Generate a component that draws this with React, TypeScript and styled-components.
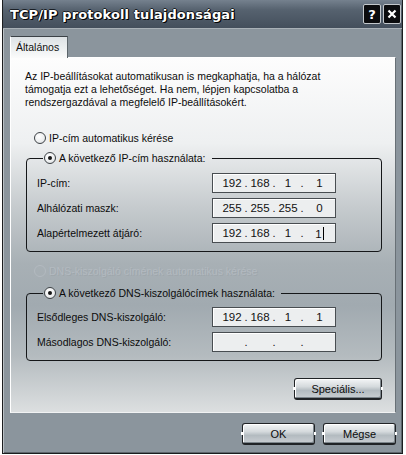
import { Fragment } from 'react';
import styled, { createGlobalStyle } from 'styled-components';

const GlobalStyle = createGlobalStyle`
  body {
    margin: 0;
    background: #ffffff;
    font-family: "Liberation Sans", Arial, sans-serif;
  }
`;

const Window = styled.div`
  width: 401px;
  height: 454px;
  margin-left: 2px;
  box-sizing: border-box;
  background: #8b959d;
  border: 1px solid #1b1d1f;
  border-top: none;
  box-shadow: inset 1px 0 0 #b9c0c5, inset -1px -1px 0 #5d656b;
  display: flex;
  flex-direction: column;
`;

const TitleBar = styled.div`
  height: 28px;
  display: flex;
  align-items: center;
  justify-content: space-between;
  padding: 0 1px 0 7px;
  background: linear-gradient(180deg, #75818e 0%, #56626f 35%, #444f5c 100%);
  border-bottom: 1px solid #a9b1b7;
`;

const Title = styled.span`
  color: #ffffff;
  font-family: "DejaVu Sans", sans-serif;
  font-weight: bold;
  font-size: 13px;
  letter-spacing: 0.1px;
  text-shadow: 1px 1px 0 #000, -1px 0 0 #1a1f25, 0 -1px 0 #1a1f25, 1px 0 0 #000;
`;

const CaptionButtons = styled.div`
  display: flex;
  gap: 2px;
`;

const CaptionButton = styled.div`
  width: 18px;
  height: 20px;
  box-sizing: border-box;
  background: #0b0c0e;
  border: 1px solid #c3c8cc;
  border-radius: 2px;
  display: flex;
  align-items: center;
  justify-content: center;
  color: #fff;
  font-family: "DejaVu Sans", sans-serif;
  font-weight: bold;
  font-size: 13px;
`;

const Body = styled.div`
  flex: 1;
  display: flex;
  flex-direction: column;
  padding: 7px 6px 0 7px;
`;

const TabStrip = styled.div`
  display: flex;
  height: 21px;
`;

const Tab = styled.div`
  position: relative;
  z-index: 1;
  width: 58px;
  height: 22px;
  box-sizing: border-box;
  padding-left: 5px;
  background: linear-gradient(180deg, #dde2e5 0%, #eef1f2 60%, #fbfbfb 100%);
  border-top: 1px solid #3b4146;
  border-left: 1px solid #ffffff;
  border-right: 1px solid #5c656b;
  font-size: 10.5px;
  line-height: 20px;
  color: #111;
`;

const Panel = styled.div`
  height: 356px;
  box-sizing: border-box;
  display: flex;
  flex-direction: column;
  padding: 12px 13px 0 14px;
  background: linear-gradient(
    180deg,
    #fdfdfd 0%,
    #eef0f1 24%,
    #c6cbce 42%,
    #a8b0b5 58%,
    #a1aab0 70%,
    #b4bbbf 84%,
    #dcdfe0 100%
  );
  border-top: 1px solid #ffffff;
  border-left: 1px solid #ffffff;
  border-right: 1px solid #687076;
  border-bottom: 1px solid #f1f2f3;
  color: #0c0c0c;
  font-size: 10.5px;
`;

const Intro = styled.p`
  margin: 0;
  line-height: 13px;
`;

const RadioRow = styled.div<{ $top: number; $disabled?: boolean }>`
  display: flex;
  align-items: center;
  gap: 3px;
  height: 16px;
  margin-top: ${(p) => p.$top}px;
  padding-left: 9px;
  color: ${(p) => (p.$disabled ? '#b3bac0' : '#0c0c0c')};
  text-shadow: ${(p) => (p.$disabled ? '1px 1px 0 rgba(150,158,164,0.5)' : 'none')};
`;

const RadioDot = styled.span<{ $checked?: boolean; $disabled?: boolean }>`
  width: 12px;
  height: 12px;
  box-sizing: border-box;
  border-radius: 50%;
  border: 1px solid ${(p) => (p.$disabled ? '#b3bac0' : '#3d4246')};
  background: ${(p) =>
    p.$disabled ? 'transparent' : 'radial-gradient(circle at 40% 35%, #ffffff 0%, #eceeef 60%, #c9cdd0 100%)'};
  display: flex;
  align-items: center;
  justify-content: center;
  &::after {
    content: '';
    width: 4px;
    height: 4px;
    border-radius: 50%;
    background: ${(p) => (p.$checked ? '#151515' : 'transparent')};
  }
`;

const Group = styled.fieldset<{ $top: number; $padTop: number }>`
  margin: ${(p) => p.$top}px 0 0 1px;
  padding: ${(p) => p.$padTop}px 0 8px 10px;
  border: 1px solid #151719;
  border-radius: 4px;
  min-inline-size: 0;
`;

const Legend = styled.legend`
  display: flex;
  align-items: center;
  gap: 3px;
  height: 16px;
  margin-left: 6px;
  padding: 0 6px 0 1px;
`;

const Fields = styled.div`
  display: grid;
  grid-template-columns: 175px 124px;
  grid-auto-rows: 20px;
  row-gap: 5px;
  align-items: center;
`;

const Label = styled.span`
  white-space: nowrap;
`;

const IpBox = styled.div`
  height: 20px;
  box-sizing: border-box;
  display: grid;
  grid-template-columns: 24px 4px 24px 4px 24px 4px 1fr;
  align-items: center;
  padding: 0 0 0 7px;
  background: #eceeef;
  border: 1px solid #484d51;
  box-shadow: inset 1px 1px 0 #ffffff;
  font-size: 11.5px;
  color: #111;
`;

const Octet = styled.span`
  text-align: center;
`;

const Dot = styled.span`
  text-align: center;
  font-size: 11px;
`;

const Caret = styled.span`
  display: inline-block;
  width: 1px;
  height: 13px;
  margin-left: 1px;
  background: #000;
  vertical-align: -2px;
`;

const Button = styled.button<{ $w: number }>`
  position: relative;
  width: ${(p) => p.$w}px;
  height: 22px;
  box-sizing: border-box;
  padding: 0;
  border: 1px solid #202326;
  border-bottom-width: 2px;
  border-radius: 3px;
  background: linear-gradient(180deg, #f3f5f6 0%, #d5dadd 40%, #b3bbc0 60%, #c9ced2 100%);
  box-shadow: inset 1px 1px 0 #ffffff, inset -1px -1px 0 #7d868c;
  font-family: "Liberation Sans", Arial, sans-serif;
  font-size: 11px;
  color: #0c0c0c;
  &::before,
  &::after {
    content: '';
    position: absolute;
    top: 8px;
    width: 2px;
    height: 3px;
    background: #ffffff;
  }
  &::before {
    left: -2px;
  }
  &::after {
    right: -2px;
  }
`;

const PanelActions = styled.div`
  display: flex;
  justify-content: flex-end;
  margin-top: 17px;
`;

const Footer = styled.div`
  display: flex;
  justify-content: flex-end;
  gap: 8px;
  margin-top: 10px;
`;

type Octets = [string, string, string, string];

const IpField = ({ octets, caret }: { octets: Octets; caret?: boolean }) => (
  <IpBox>
    <Octet>{octets[0]}</Octet>
    <Dot>.</Dot>
    <Octet>{octets[1]}</Octet>
    <Dot>.</Dot>
    <Octet>{octets[2]}</Octet>
    <Dot>.</Dot>
    <Octet>
      {octets[3]}
      {caret && <Caret />}
    </Octet>
  </IpBox>
);

const ipRows: { label: string; octets: Octets; caret?: boolean }[] = [
  { label: 'IP-cím:', octets: ['192', '168', '1', '1'] },
  { label: 'Alhálózati maszk:', octets: ['255', '255', '255', '0'] },
  { label: 'Alapértelmezett átjáró:', octets: ['192', '168', '1', '1'], caret: true },
];

const dnsRows: { label: string; octets: Octets }[] = [
  { label: 'Elsődleges DNS-kiszolgáló:', octets: ['192', '168', '1', '1'] },
  { label: 'Másodlagos DNS-kiszolgáló:', octets: ['', '', '', ''] },
];

export default function App() {
  return (
    <>
      <GlobalStyle />
      <Window>
        <TitleBar>
          <Title>TCP/IP protokoll tulajdonságai</Title>
          <CaptionButtons>
            <CaptionButton>?</CaptionButton>
            <CaptionButton>
              <svg width="10" height="10" viewBox="0 0 10 10">
                <path d="M1.5 1.5 L8.5 8.5 M8.5 1.5 L1.5 8.5" stroke="#fff" strokeWidth="2.2" />
              </svg>
            </CaptionButton>
          </CaptionButtons>
        </TitleBar>

        <Body>
          <TabStrip>
            <Tab>Általános</Tab>
          </TabStrip>

          <Panel>
            <Intro>
              Az IP-beállításokat automatikusan is megkaphatja, ha a hálózat
              <br />
              támogatja ezt a lehetőséget. Ha nem, lépjen kapcsolatba a
              <br />
              rendszergazdával a megfelelő IP-beállításokért.
            </Intro>

            <RadioRow $top={21}>
              <RadioDot />
              IP-cím automatikus kérése
            </RadioRow>

            <Group $top={4} $padTop={7}>
              <Legend>
                <RadioDot $checked />
                A következő IP-cím használata:
              </Legend>
              <Fields>
                {ipRows.map((r) => (
                  <Fragment key={r.label}>
                    <Label>{r.label}</Label>
                    <IpField octets={r.octets} caret={r.caret} />
                  </Fragment>
                ))}
              </Fields>
            </Group>

            <RadioRow $top={11} $disabled>
              <RadioDot $disabled />
              DNS-kiszolgáló címének automatikus kérése
            </RadioRow>

            <Group $top={6} $padTop={6}>
              <Legend>
                <RadioDot $checked />
                A következő DNS-kiszolgálócímek használata:
              </Legend>
              <Fields>
                {dnsRows.map((r) => (
                  <Fragment key={r.label}>
                    <Label>{r.label}</Label>
                    <IpField octets={r.octets} />
                  </Fragment>
                ))}
              </Fields>
            </Group>

            <PanelActions>
              <Button $w={88}>Speciális...</Button>
            </PanelActions>
          </Panel>

          <Footer>
            <Button $w={73}>OK</Button>
            <Button $w={73}>Mégse</Button>
          </Footer>
        </Body>
      </Window>
    </>
  );
}
